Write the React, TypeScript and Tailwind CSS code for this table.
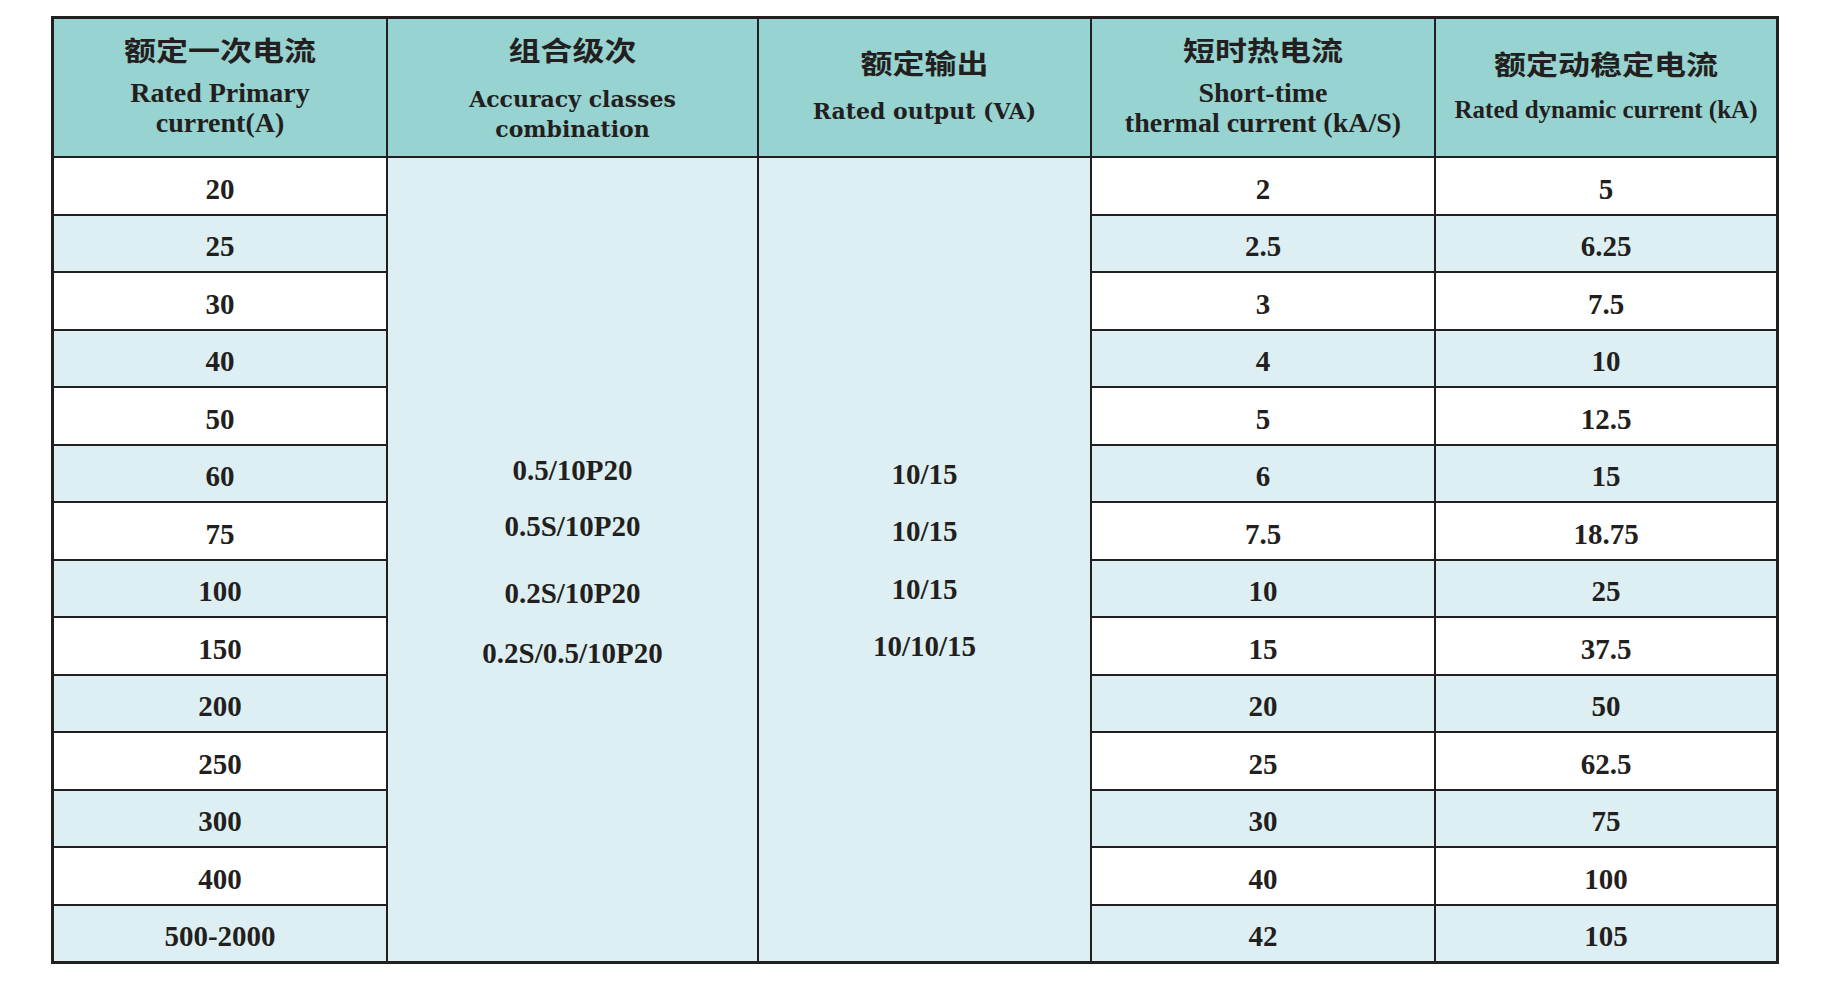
import React from 'react'

const rows = [
  { current: '20', thermal: '2', dynamic: '5' },
  { current: '25', thermal: '2.5', dynamic: '6.25' },
  { current: '30', thermal: '3', dynamic: '7.5' },
  { current: '40', thermal: '4', dynamic: '10' },
  { current: '50', thermal: '5', dynamic: '12.5' },
  { current: '60', thermal: '6', dynamic: '15' },
  { current: '75', thermal: '7.5', dynamic: '18.75' },
  { current: '100', thermal: '10', dynamic: '25' },
  { current: '150', thermal: '15', dynamic: '37.5' },
  { current: '200', thermal: '20', dynamic: '50' },
  { current: '250', thermal: '25', dynamic: '62.5' },
  { current: '300', thermal: '30', dynamic: '75' },
  { current: '400', thermal: '40', dynamic: '100' },
  { current: '500-2000', thermal: '42', dynamic: '105' },
]

const cn = "font-['Noto_Sans_CJK_SC',sans-serif] font-bold text-[32px] leading-[36px] scale-y-[0.84]"
const times = "font-['Liberation_Serif','Noto_Sans_CJK_SC',serif] font-bold"
const wide = "font-['DejaVu_Serif','Liberation_Serif',serif] font-bold text-[22px]"

const rowClasses = [
  'row-start-2', 'row-start-3', 'row-start-4', 'row-start-5', 'row-start-6', 'row-start-7', 'row-start-8',
  'row-start-9', 'row-start-10', 'row-start-11', 'row-start-12', 'row-start-13', 'row-start-14', 'row-start-15',
]

function DataCell({ value, row, col }: { value: string; row: number; col: number }) {
  const bg = row % 2 === 0 ? 'bg-white' : 'bg-[#ddeff2]'
  const colClass = col === 1 ? 'col-start-1' : col === 4 ? 'col-start-4' : 'col-start-5'
  return (
    <div className={`${bg} ${colClass} ${rowClasses[row]} flex items-center justify-center pt-[7px] ${times} text-[29px]`}>
      {value}
    </div>
  )
}

export default function App() {
  return (
    <div className="min-h-screen bg-white text-[#231f20] pl-[51px] pt-[16px]">
      <div className="grid w-[1728px] h-[948px] grid-cols-[332px_369px_331px_342px_340px] grid-rows-[137px_repeat(14,minmax(0,1fr))] gap-[2px] p-[3px] bg-[#231f20]">
        {/* header */}
        <div className="bg-[#97d3d0] flex flex-col items-center pt-[12px]">
          <div className={cn}>额定一次电流</div>
          <div className={`${times} text-[28px] leading-[30px] mt-[11px]`}>Rated Primary</div>
          <div className={`${times} text-[28px] leading-[30px]`}>current(A)</div>
        </div>
        <div className="bg-[#97d3d0] flex flex-col items-center pt-[12px]">
          <div className={cn}>组合级次</div>
          <div className={`${wide} leading-[30px] mt-[17px]`}>Accuracy classes</div>
          <div className={`${wide} leading-[30px]`}>combination</div>
        </div>
        <div className="bg-[#97d3d0] flex flex-col items-center pt-[25px]">
          <div className={cn}>额定输出</div>
          <div className={`${wide} leading-[30px] mt-[16px]`}>Rated output (VA)</div>
        </div>
        <div className="bg-[#97d3d0] flex flex-col items-center pt-[12px]">
          <div className={cn}>短时热电流</div>
          <div className={`${times} text-[28px] leading-[30px] mt-[11px]`}>Short-time</div>
          <div className={`${times} text-[28px] leading-[30px]`}>thermal current (kA/S)</div>
        </div>
        <div className="bg-[#97d3d0] flex flex-col items-center pt-[26px]">
          <div className={cn}>额定动稳定电流</div>
          <div className={`${times} text-[25px] leading-[30px] mt-[14px]`}>Rated dynamic current (kA)</div>
        </div>

        {/* merged columns */}
        <div className={`col-start-2 row-start-2 row-span-14 bg-[#ddeff2] flex flex-col items-center justify-center pt-[5px] ${times} text-[29px]`}>
          <div className="h-[56px] flex items-center">0.5/10P20</div>
          <div className="h-[56px] flex items-center">0.5S/10P20</div>
          <div className="h-[56px] flex items-center mt-[11px]">0.2S/10P20</div>
          <div className="h-[56px] flex items-center mt-[4px]">0.2S/0.5/10P20</div>
        </div>
        <div className={`col-start-3 row-start-2 row-span-14 bg-[#ddeff2] flex flex-col items-center justify-center pt-[3px] ${times} text-[29px]`}>
          <div className="h-[57px] flex items-center">10/15</div>
          <div className="h-[57px] flex items-center">10/15</div>
          <div className="h-[57px] flex items-center mt-[1px]">10/15</div>
          <div className="h-[57px] flex items-center">10/10/15</div>
        </div>

        {rows.map((r, i) => (
          <React.Fragment key={r.current}>
            <DataCell value={r.current} row={i} col={1} />
            <DataCell value={r.thermal} row={i} col={4} />
            <DataCell value={r.dynamic} row={i} col={5} />
          </React.Fragment>
        ))}
      </div>
    </div>
  )
}
